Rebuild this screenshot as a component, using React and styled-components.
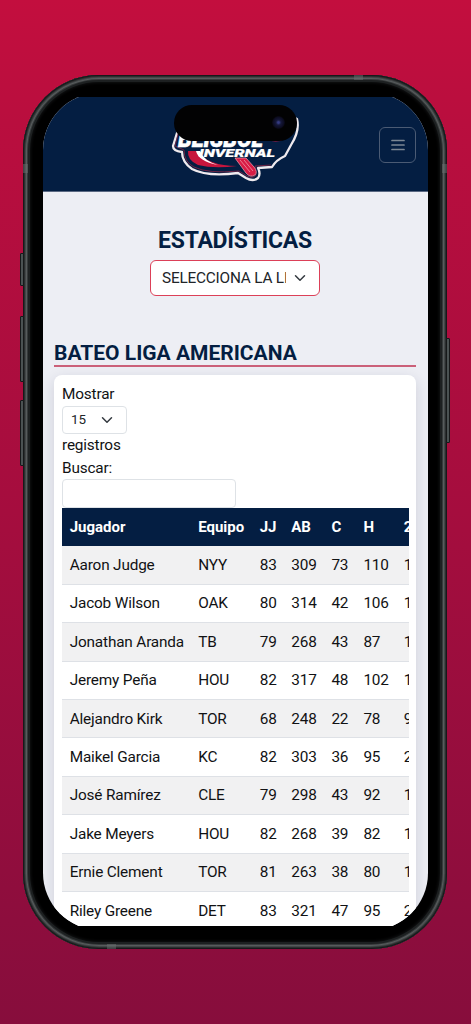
import React from 'react';
import styled, { createGlobalStyle } from 'styled-components';

const GlobalStyle = createGlobalStyle`
  * {
    box-sizing:border-box;
  }

  body {
    margin:0;
    font-family:Roboto, "Liberation Sans", sans-serif;
    font-size:15.35px;
    letter-spacing:-.17px;
    color:#111214;
  }
`;

const Backdrop = styled.div`
  width:471px;
  height:1024px;
  padding:75px 24px 0 23px;
  overflow:hidden;
  background:linear-gradient(#c30e3e 0%, #b90e3e 12%, #a50d3e 50%, #8d0d3d 90%, #870d3c 100%);
`;

const Phone = styled.div`
  position:relative;
  height:874px;
  padding:18px 19px 19px 20px;
  border-radius:76px;
  background:#000;
  box-shadow:
    inset 0 0 0 1px #17191a,
    inset 0 0 0 2px #2b2e2f,
    inset 0 0 0 3px #434748,
    inset 0 0 0 4px #575b5c,
    inset 0 0 0 5px #363a3b,
    inset 0 0 0 7px #1d2021,
    inset 0 0 3px 8px #101112;
`;

const SideButton = styled.div`
  position:absolute;
  top:${props => props.$top}px;
  ${props => props.$side}:-3px;
  width:4px;
  height:${props => props.$height}px;
  border:1px solid #17191a;
  border-radius:1px;
  background:#4b5253;
`;

const AntennaBand = styled.div`
  position:absolute;
  left:${props => props.$left}px;
  top:${props => props.$top}px;
  width:${props => props.$wide ? 9 : 5}px;
  height:${props => props.$wide ? 5 : 9}px;
  background:rgba(105, 111, 112, .5);
`;

const Screen = styled.div`
  height:837px;
  padding:4px 0;
  border-radius:57px;
  overflow:hidden;
  background:#000;
`;

const Page = styled.div`
  height:829px;
  overflow:hidden;
  background:#edeef4;
`;

const Island = styled.div`
  position:absolute;
  left:151px;
  top:30px;
  width:123px;
  height:36px;
  border-radius:18px;
  background:#020203;

  &::after {
    content:'';
    position:absolute;
    right:12px;
    top:11px;
    width:13px;
    height:13px;
    border-radius:50%;
    background:radial-gradient(circle, #343a82 0 9%, #151839 28%, #0d0d24 55%, #050509 75%);
  }
`;

const HeadBar = styled.header`
  display:flex;
  justify-content:space-between;
  height:95px;
  padding-right:12px;
  padding-left:117px;
  background:#041e42;
  border-bottom:1px solid #5a6882;
`;

const MenuButton = styled.button`
  display:flex;
  align-items:center;
  justify-content:center;
  width:37px;
  height:36px;
  margin-top:30px;
  padding:0;
  border:1px solid #4b5b74;
  border-radius:6px;
  background:transparent;
`;

const Filter = styled.section`
  display:flex;
  flex-direction:column;
  align-items:center;
  padding:34px 1px 0 0;
`;

const Title = styled.h1`
  margin:0;
  font-size:23px;
  font-weight:700;
  letter-spacing:-.27px;
  line-height:30px;
  color:#041e42;
`;

const SelectBox = styled.div`
  display:flex;
  align-items:center;
  justify-content:space-between;
  width:${props => props.$small ? 65 : 170}px;
  height:${props => props.$small ? 28.5 : 36}px;
  padding:0 13px 0 ${props => props.$small ? 8 : 11}px;
  border:1px solid ${props => props.$small ? '#dee2e6' : '#dc4058'};
  border-radius:${props => props.$small ? 4 : 6}px;
  background:#fff;
  font-size:${props => props.$small ? 13.4 : 15.35}px;
  letter-spacing:${props => props.$small ? 0 : -.2}px;
  color:#212529;

  span {
    width:${props => props.$small ? 'auto' : '124px'};
    overflow:hidden;
    white-space:nowrap;
  }

  svg {
    flex:none;
  }
`;

const LeagueSelect = styled(SelectBox)`
  margin-top:4px;
`;

const Stats = styled.section`
  padding:43px 12px 0 11px;
`;

const SectionTitle = styled.h2`
  height:28px;
  margin:0 0 8px;
  border-bottom:2px solid #cb6079;
  font-size:21px;
  font-weight:700;
  letter-spacing:0;
  line-height:29px;
  color:#041e42;
`;

const Card = styled.div`
  height:580px;
  padding:8px 7px 0 8px;
  border-radius:8px;
  background:#fff;
  box-shadow:0 4px 14px rgba(20, 30, 65, .14);
  line-height:22.5px;
`;

const SearchInput = styled.input`
  display:block;
  width:174px;
  height:29px;
  border:1px solid #dee2e6;
  border-radius:4px;
  background:#fff;
`;

const TableWrapper = styled.div`
  width:347px;
  overflow:hidden;
`;

const Table = styled.table`
  width:382px;
  table-layout:fixed;
  border-collapse:separate;
  border-spacing:0;

  th, td {
    height:38.4px;
    padding:1px 0 0 7.7px;
    border-bottom:1px solid #dee1e6;
    line-height:23px;
    text-align:left;
    white-space:nowrap;
  }

  th {
    border-color:#041e42;
    background:#041e42;
    color:#fff;
    font-size:15px;
    font-weight:700;
    letter-spacing:0;
  }

  tbody tr:nth-child(odd) td {
    background:#f1f1f2;
  }
`;

const columns = [
  { label: 'Jugador', width: 128.5 },
  { label: 'Equipo', width: 61.5 },
  { label: 'JJ', width: 31.6 },
  { label: 'AB', width: 40.1 },
  { label: 'C', width: 32 },
  { label: 'H', width: 40.3 },
  { label: '2', width: 48 },
];

const players = [
  ['Aaron Judge', 'NYY', 83, 309, 73, 110, 1],
  ['Jacob Wilson', 'OAK', 80, 314, 42, 106, 1],
  ['Jonathan Aranda', 'TB', 79, 268, 43, 87, 1],
  ['Jeremy Peña', 'HOU', 82, 317, 48, 102, 1],
  ['Alejandro Kirk', 'TOR', 68, 248, 22, 78, 9],
  ['Maikel Garcia', 'KC', 82, 303, 36, 95, 2],
  ['José Ramírez', 'CLE', 79, 298, 43, 92, 1],
  ['Jake Meyers', 'HOU', 82, 268, 39, 82, 1],
  ['Ernie Clement', 'TOR', 81, 263, 38, 80, 1],
  ['Riley Greene', 'DET', 83, 321, 47, 95, 2],
];

function Chevron() {
  return (
    <svg width="12" height="12" viewBox="0 0 16 16" fill="none" stroke="#343a40" strokeWidth="2" strokeLinecap="round" strokeLinejoin="round">
      <path d="m2 5 6 6 6-6" />
    </svg>
  );
}

function Logo() {
  return (
    <svg width="150" height="94" viewBox="0 2 150 94">
      <path
        d="M17 38 L13 51 Q13 56 22 57 Q22 67 32 74 Q47 82 78 78 L86 83 Q93 87 98 83 Q101 79 98 73 L112 72 Q116 65 125 61 L131 50 Q140 36 137 24 L125 18 Z"
        fill="#041e42"
        stroke="#efeaee"
        strokeWidth="2.3"
        strokeLinejoin="round"
      />
      <path d="M18 39 L15 51 L24 55 Q24 67 34 72 Q48 79 79 76 L87 81 Q93 84 96 80 L95 71 L111 70" fill="none" stroke="#9c2646" strokeWidth=".7" />
      <path d="M28 56 Q27 65 38 70 Q54 74 77 71 Q49 71 36 56 Z" fill="#c7153d" />
      <path d="M36 56 Q38 66 58 70 Q44 66 40 56 Z" fill="#fff" />
      <path d="M105 43 Q116 50 126 43 Q134 37 137 25 Q132 36 121 41 Z" fill="#c7153d" />
      <path d="M108 40 Q116 49 129 39 Z" fill="#f6edf0" />
      <path d="m113 42 2 3 m4-3 0 3 m4-4 -1 3" fill="none" stroke="#c7153d" strokeWidth="1" />
      <path d="M75 63 L86 78 Q90 83 95 80 Q98 77 94 72 L86 63 Z" fill="#d71c45" stroke="#f4a4b2" strokeWidth=".7" />
      <path d="m80 65 10 12 m-6-12 9 11" fill="none" stroke="#f3a5b4" strokeWidth=".7" />
      <g fill="#fff" strokeWidth=".5" fontFamily="Roboto, sans-serif" fontStyle="italic" fontWeight="900" letterSpacing="0">
        <text x="18" y="52" fontSize="23" stroke="#fff" textLength="85" lengthAdjust="spacingAndGlyphs">BEISBOL</text>
        <text x="39" y="62.3" fontSize="11.7" stroke="#fff" strokeWidth=".2" textLength="76" lengthAdjust="spacingAndGlyphs">INVERNAL</text>
      </g>
    </svg>
  );
}

function App() {
  return (
    <Backdrop>
      <GlobalStyle />
      <Phone>
        <SideButton $side="left" $top={178} $height={33} />
        <SideButton $side="left" $top={241} $height={66} />
        <SideButton $side="left" $top={325} $height={66} />
        <SideButton $side="right" $top={263} $height={105} />
        <AntennaBand $left={0} $top={89} />
        <AntennaBand $left={419} $top={89} />
        <AntennaBand $left={331} $top={0} $wide />
        <AntennaBand $left={84} $top={869} $wide />

        <Screen>
          <Page>
            <HeadBar>
              <Logo />
              <MenuButton aria-label="Menu">
                <svg width="14" height="13" viewBox="0 0 14 13" stroke="#7b8794" strokeWidth="1.7" strokeLinecap="round">
                  <path d="M1 1.5h12M1 6h12M1 10.5h12" />
                </svg>
              </MenuButton>
            </HeadBar>

            <Filter>
              <Title>ESTADÍSTICAS</Title>
              <LeagueSelect>
                <span>SELECCIONA LA LIGA</span>
                <Chevron />
              </LeagueSelect>
            </Filter>

            <Stats>
              <SectionTitle>BATEO LIGA AMERICANA</SectionTitle>
              <Card>
                <div>Mostrar</div>
                <SelectBox $small>
                  <span>15</span>
                  <Chevron />
                </SelectBox>
                <div>registros</div>
                <div>Buscar:</div>
                <SearchInput type="text" aria-label="Buscar" />
                <TableWrapper>
                  <Table>
                    <colgroup>
                      {columns.map(col => <col key={col.label} style={{ width: col.width }} />)}
                    </colgroup>
                    <thead>
                      <tr>
                        {columns.map(col => <th key={col.label}>{col.label}</th>)}
                      </tr>
                    </thead>
                    <tbody>
                      {players.map(player => (
                        <tr key={player[0]}>
                          {player.map((value, i) => <td key={i}>{value}</td>)}
                        </tr>
                      ))}
                    </tbody>
                  </Table>
                </TableWrapper>
              </Card>
            </Stats>
          </Page>
        </Screen>
        <Island />
      </Phone>
    </Backdrop>
  );
}

export default App;
